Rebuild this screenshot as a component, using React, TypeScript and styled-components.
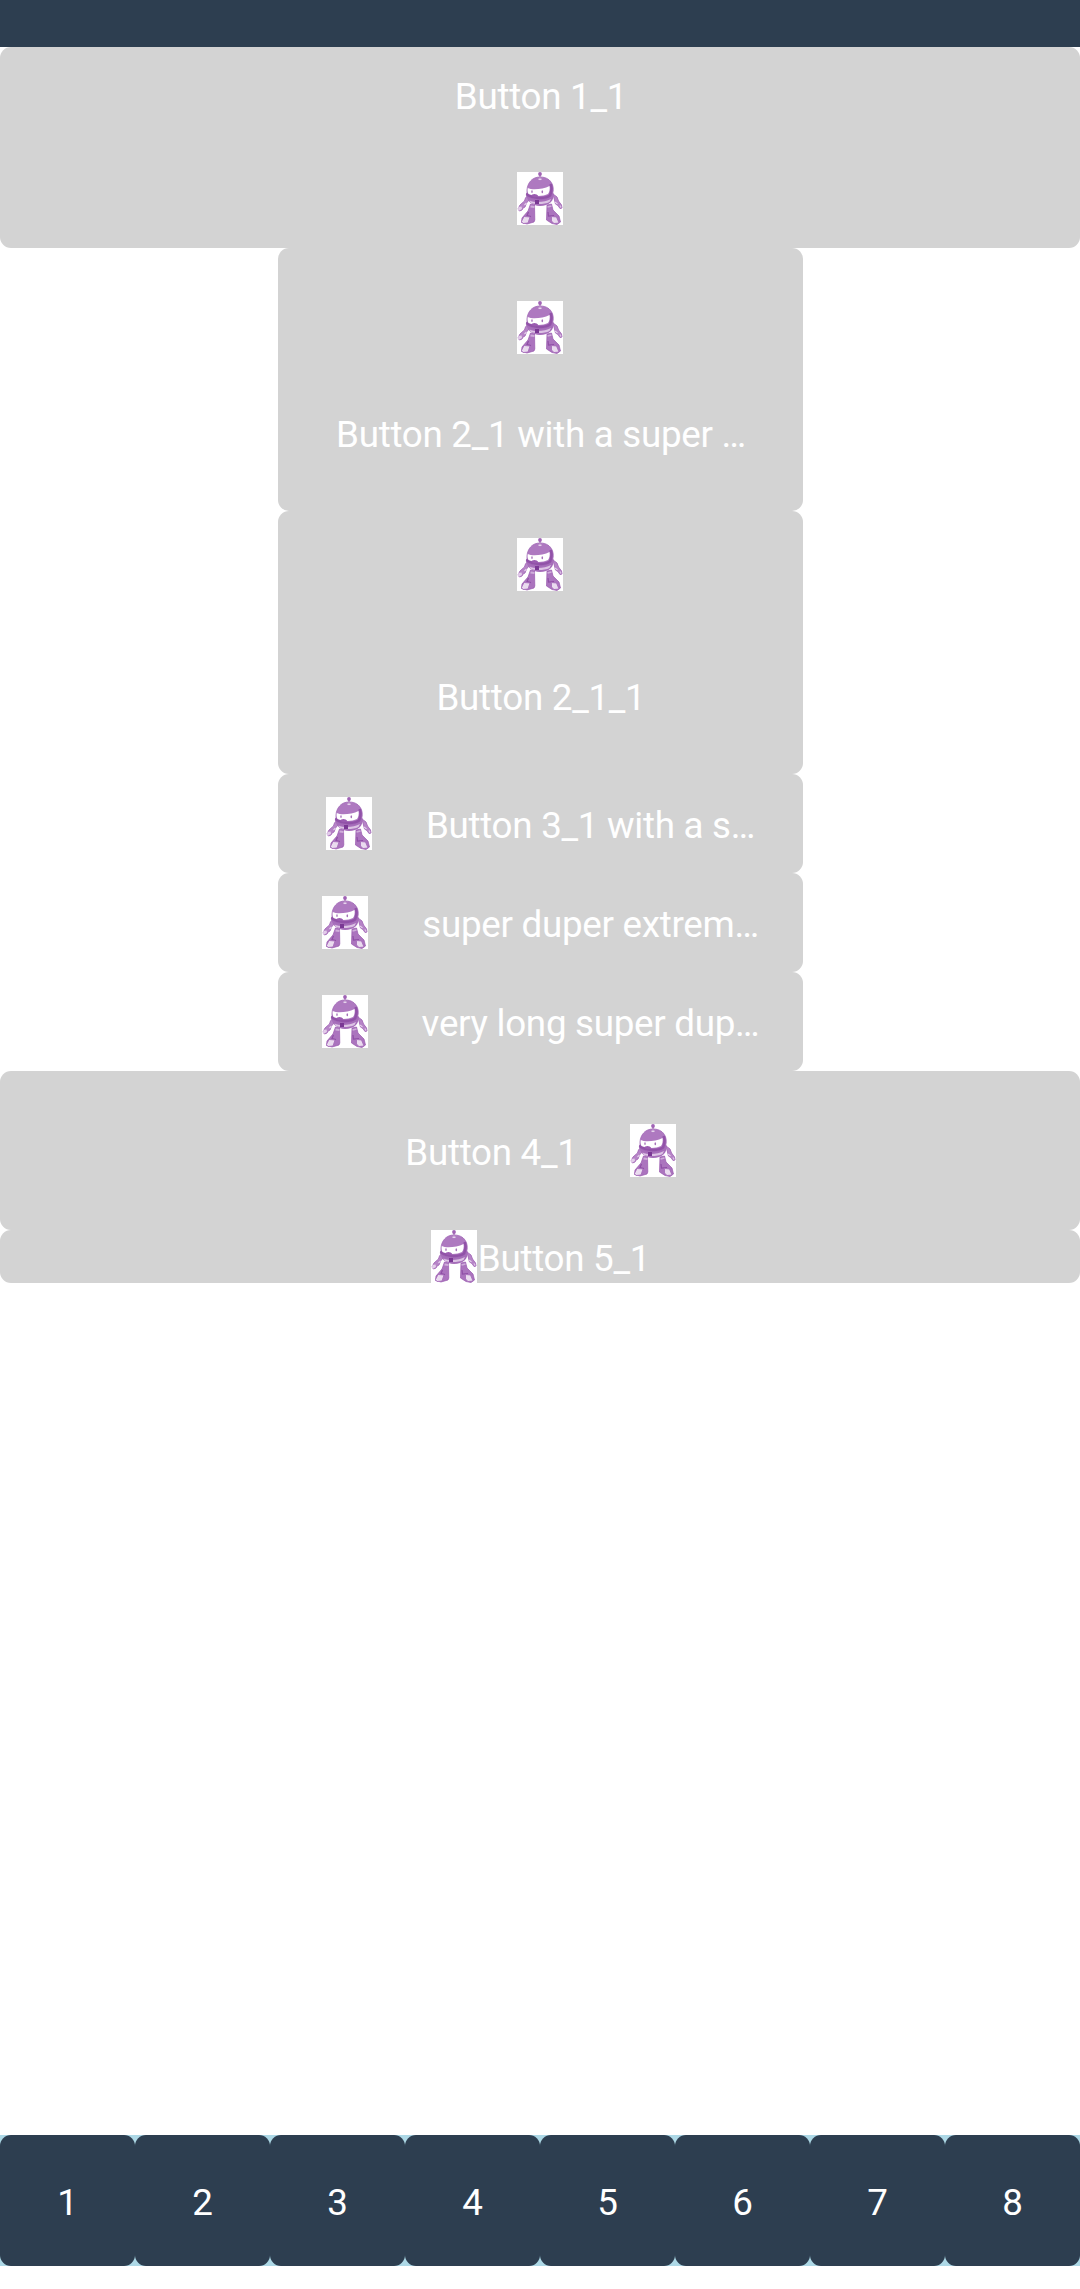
import React from "react";
import styled, { createGlobalStyle } from "styled-components";

const GlobalStyle = createGlobalStyle`
  html, body, #root { margin: 0; padding: 0; height: 100%; }
  body { background: #ffffff; font-family: Roboto, "Liberation Sans", sans-serif; }
`;

const Screen = styled.div`
  display: flex;
  flex-direction: column;
  width: 1080px;
  height: 2289px;
  overflow: hidden;
`;

const StatusBar = styled.header`
  flex: none;
  height: 47px;
  background: #2d3e50;
`;

const Content = styled.main`
  flex: 1;
  display: flex;
  flex-direction: column;
  align-items: center;
`;

const ImageButton = styled.button<{
  $direction?: string;
  $gap?: number;
  $padding?: string;
  $wide?: boolean;
}>`
  box-sizing: border-box;
  flex: none;
  display: flex;
  flex-direction: ${(p) => p.$direction ?? "row"};
  align-items: center;
  justify-content: center;
  gap: ${(p) => p.$gap ?? 53}px;
  width: ${(p) => (p.$wide ? "1080px" : "auto")};
  min-width: 525px;
  padding: ${(p) => p.$padding ?? "23px 0"};
  border: 0;
  border-radius: 11px;
  background: #d3d3d3;
`;

const Label = styled.span`
  box-sizing: border-box;
  height: 51px;
  margin: 0 -1px 0 0;
  padding: 4px 0 0 1px;
  color: #ffffff;
  font-family: Roboto, "Liberation Sans", sans-serif;
  font-size: 36.75px;
  line-height: 47px;
  letter-spacing: -0.28px;
  white-space: nowrap;
`;

const TabLabel = styled(Label)`
  margin: 0;
  padding: 4px 0 0;
`;

const RobotImage = styled.svg`
  display: block;
  flex: none;
  width: 46px;
  height: 53px;
  background: #ffffff;
`;

const TabBar = styled.nav`
  flex: none;
  display: grid;
  grid-template-columns: repeat(8, 1fr);
  height: 131px;
  margin-bottom: 23px;
  background: #add8e6;
`;

const Tab = styled.button`
  display: flex;
  align-items: center;
  justify-content: center;
  padding: 0;
  border: 0;
  border-radius: 11px;
  background: #2d3e50;
`;

function Robot() {
  return (
    <RobotImage viewBox="0 0 46 53" aria-hidden="true">
      {/* arms */}
      <path d="M11 23 8.500 26 7.500 29 3 33 1 37 2.500 39 5 38 6 36 8 35 9.500 31 12 28Z" fill="#b684c7" stroke="#a368b7" strokeWidth=".9" />
      <path d="M36 22 40 25 41.500 29 44.500 33 45 36 43 36.500 41 33.500 38.500 32 37.500 28Z" fill="#b684c7" stroke="#a368b7" strokeWidth=".9" />
      <path d="M1.300 35 4.500 34.500 5 37 2.500 38.500 1 38Z" fill="#e3cdea" />
      <path d="M42.500 33.500 44 33.500 44.500 35.500 43.300 35.800Z" fill="#dcc3e4" />
      <path d="M7.500 33 9.500 31M38 30 40.500 32" stroke="#e3cdea" strokeWidth="1.200" />
      {/* legs */}
      <path d="M13.500 32 17.500 33 17.800 48 17 50 10 52 4.500 50.500 5 46 11 39Z" fill="#ab74be" stroke="#9857ae" strokeWidth=".7" />
      <path d="M30 33 34.500 32 36 38 42 44 43.500 50 40 52.500 35 51.500 29.500 48Z" fill="#ab74be" stroke="#9857ae" strokeWidth=".7" />
      <path d="M13.500 34.500 17.500 35M30.500 35 34.500 34" stroke="#cfaeda" strokeWidth="1.800" />
      <path d="M11.500 40 10 43.500 14 44.500M31 40 31.500 44 37 43.500" fill="none" stroke="#8f4fa6" strokeWidth="1.200" />
      <path d="M7 44.500 13 45 11 51 6 51.500 4.500 49.500Z" fill="#eadbef" stroke="#a368b7" strokeWidth=".8" />
      <path d="M34.500 44.500 39.500 45 42 51 37 51.500 34.500 49Z" fill="#eadbef" stroke="#a368b7" strokeWidth=".8" />
      {/* body */}
      <path d="M9 21 36.500 21C37.500 29 32 34 23 34 15 34 9.500 29 9 21Z" fill="#a66eba" />
      <path d="M12.500 28.500C18 31 28 30.500 34 27L32.500 30C28 32.500 18 32.500 14 31Z" fill="#dcc3e4" />
      {/* helmet and visor */}
      <path d="M23 5C15 5 10.500 11 10 18V24C17 29 30 29 35 23 38 17 36 5 23 5Z" fill="#ae79c0" stroke="#a067b5" strokeWidth=".8" />
      <path d="M33.500 12C35 15 34.500 20 33 23.500 28 27 16 27 9.500 22" fill="none" stroke="#9152a8" strokeWidth="2.600" />
      <path d="M10.800 16C15 18.300 26 17.300 32.500 14 33.200 17 32.300 20.500 31 22 26 24.500 17 24.500 11.500 22 10.500 20 10.300 18 10.800 16Z" fill="#ffffff" />
      <path d="M14 23.800C15 21.500 19.500 21 21.500 24.300 19 25.500 16 25.500 14 23.800Z" fill="#9a5bb0" />
      <ellipse cx="15" cy="19.700" rx=".7" ry="1.400" fill="#a56fb8" />
      <ellipse cx="25.300" cy="19.800" rx=".8" ry="1.500" fill="#a56fb8" />
      <rect x="18" y="28" width="4" height="4" fill="#7a3894" />
      {/* antenna */}
      <path d="M23 3V8" stroke="#b78ac6" strokeWidth="1.800" />
      <path d="M21.500 7.300H24.500" stroke="#e5d2eb" strokeWidth="1.500" />
      <ellipse cx="23" cy="2" rx="1.900" ry="2" fill="#a063b5" />
    </RobotImage>
  );
}

const TABS = ["1", "2", "3", "4", "5", "6", "7", "8"];

export default function App() {
  return (
    <>
      <GlobalStyle />
      <Screen>
        <StatusBar />
        <Content>
          <ImageButton $wide $direction="column" $padding="22px 0 23px" $gap={52}>
            <Label>Button 1_1</Label>
            <Robot />
          </ImageButton>
          <ImageButton $direction="column" $padding="53px 0">
            <Robot />
            <Label>Button 2_1 with a super …</Label>
          </ImageButton>
          <ImageButton $direction="column" $padding="27px 0 53px" $gap={79}>
            <Robot />
            <Label>Button 2_1_1</Label>
          </ImageButton>
          <ImageButton>
            <Robot />
            <Label>Button 3_1 with a s…</Label>
          </ImageButton>
          <ImageButton>
            <Robot />
            <Label>super duper extrem…</Label>
          </ImageButton>
          <ImageButton>
            <Robot />
            <Label>very long super dup…</Label>
          </ImageButton>
          <ImageButton $wide $padding="53px 0">
            <Label>Button 4_1</Label>
            <Robot />
          </ImageButton>
          <ImageButton $wide $padding="0" $gap={0}>
            <Robot />
            <Label>Button 5_1</Label>
          </ImageButton>
        </Content>
        <TabBar>
          {TABS.map((tab) => (
            <Tab key={tab}>
              <TabLabel>{tab}</TabLabel>
            </Tab>
          ))}
        </TabBar>
      </Screen>
    </>
  );
}
